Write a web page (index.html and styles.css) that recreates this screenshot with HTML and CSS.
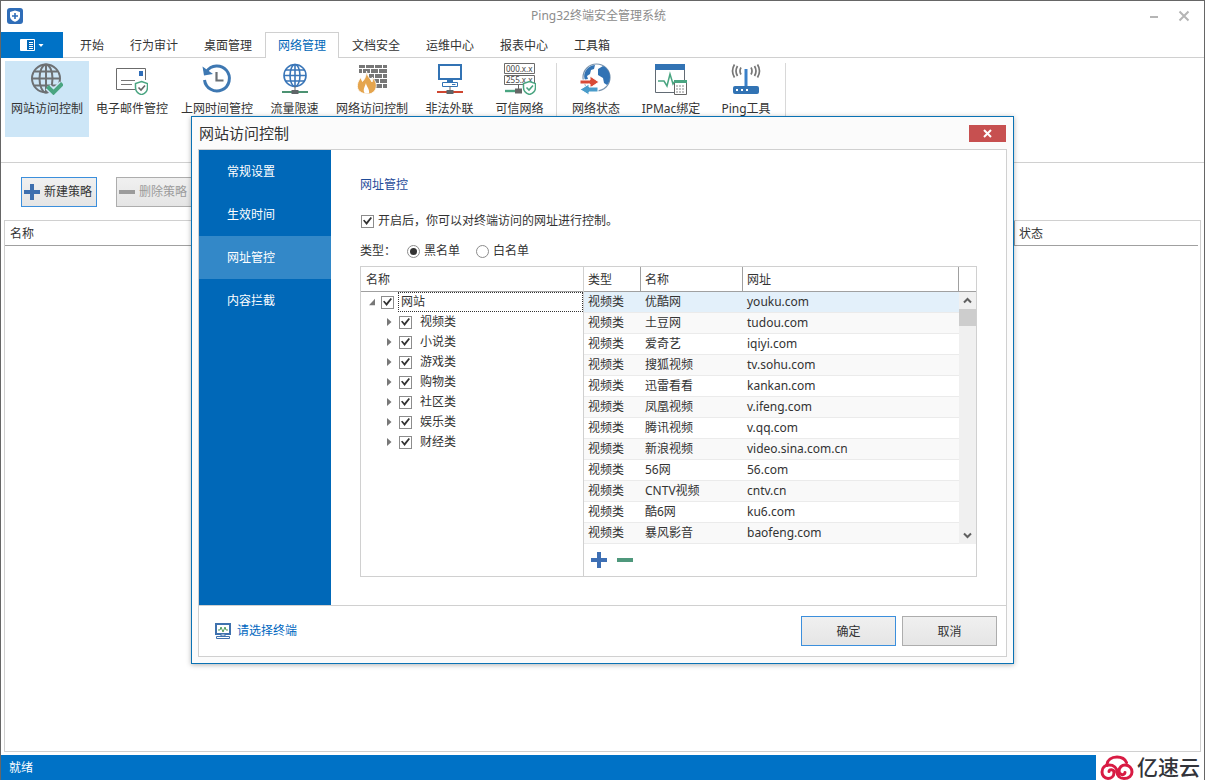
FILE: index.html
```html
<!DOCTYPE html>
<html lang="zh-CN">
<head>
<meta charset="utf-8">
<title>Ping32终端安全管理系统</title>
<link rel="stylesheet" href="styles.css">
</head>
<body>
<div class="app">
  <header class="titlebar">
    <svg class="app-logo" viewBox="0 0 16 16"><rect width="16" height="16" rx="3" fill="#2f6db8"/><path d="M8 2.500l5 1.400v4.300c0 3-2.500 4.600-5 5.600-2.500-1-5-2.600-5-5.600V3.900z" fill="#fff"/><path d="M8 5v6M5 8h6" stroke="#2f6db8" stroke-width="1.600"/></svg>
    <h1 class="app-title">Ping32终端安全管理系统</h1>
    <div class="window-buttons">
      <button class="window-button" aria-label="最小化"><svg viewBox="0 0 12 12"><path d="M2 7h8" stroke="#b5b5b5" stroke-width="2"/></svg></button>
      <button class="window-button" aria-label="关闭"><svg viewBox="0 0 12 12"><path d="M1.500 1.500l9 9M10.500 1.500l-9 9" stroke="#b5b5b5" stroke-width="2"/></svg></button>
    </div>
  </header>

  <nav class="tabs">
    <button class="file-menu" aria-label="菜单">
      <svg class="file-icon" viewBox="0 0 24 12"><path d="M.5.5h14v11H.5z" fill="#0068b8" stroke="#fff"/><path d="M1 1h6v10H1z" fill="#fff"/><path d="M9 3.500h4M9 5.500h4M9 7.500h4M9 9.500h4" stroke="#fff"/><path d="M18.500 5h5L21 8z" fill="#fff"/></svg>
    </button>
    <button class="tab">开始</button>
    <button class="tab">行为审计</button>
    <button class="tab">桌面管理</button>
    <button class="tab tab-active">网络管理</button>
    <button class="tab">文档安全</button>
    <button class="tab">运维中心</button>
    <button class="tab">报表中心</button>
    <button class="tab">工具箱</button>
  </nav>

  <section class="ribbon">
    <button class="tool tool-wide tool-active">
      <svg viewBox="0 0 32 32"><g fill="none" stroke="#6d7073" stroke-width="2"><circle cx="15" cy="15.500" r="14"/><ellipse cx="15" cy="15.500" rx="6.500" ry="14"/><path d="M15 1v29M1 15.500h28M3.500 8.500h23M3.500 22.500h23"/></g><path d="M17 24l5.500 5.500L31 21" fill="none" stroke="#cde6f7" stroke-width="7"/><path d="M16.500 23.500l6 6L31.500 20.500" fill="none" stroke="#4aa581" stroke-width="4"/></svg>
      网站访问控制</button>
    <button class="tool tool-wide">
      <svg viewBox="0 0 32 32"><path d="M19 26.500H.5v-21h29V17" fill="none" stroke="#6b6b6b"/><path d="M23 8h4v5h-4z" fill="#2f6db8"/><path d="M5 17.500h14M5 21.500h11" stroke="#777"/><path d="M25.500 18.500l6 2v4c0 4-3 6.200-6 7.200-3-1-6-3.200-6-7.200v-4z" fill="#fff" stroke="#4aa581" stroke-width="1.500"/><path d="M22.500 24.500l2.500 2.500 4-4.500" fill="none" stroke="#666" stroke-width="1.600"/></svg>
      电子邮件管控</button>
    <button class="tool tool-wide">
      <svg viewBox="0 0 32 32"><path d="M5.500 8.500A12.500 12.500 0 1 1 3.500 17" fill="none" stroke="#3e78b2" stroke-width="3"/><path d="M1.500 3.500l1.500 9 9-1.500z" fill="#3e78b2"/><path d="M15.500 9v8.500h7" fill="none" stroke="#6b7075" stroke-width="2.200"/></svg>
      上网时间管控</button>
    <button class="tool tool-narrow">
      <svg viewBox="0 0 32 32"><g fill="none" stroke="#3a76b8" stroke-width="1.600"><circle cx="16" cy="12.500" r="11"/><ellipse cx="16" cy="12.500" rx="5" ry="11"/><path d="M16 1.500v22M5 12.500h22M7 7h18M7 18h18"/></g><path d="M3 29h26" stroke="#4c9272" stroke-width="2"/><path d="M16 23v5" stroke="#666"/><path d="M12.500 27h7v4h-7z" fill="#5f6568"/></svg>
      流量限速</button>
    <button class="tool tool-wide">
      <svg viewBox="0 0 32 32"><g fill="#777"><path d="M3 2h6v3H3zM10 2h8v3h-8zM19 2h7v3h-7zM27 2h4v3h-4zM3 6h3v4H3zM7 6h7v4H7zM15 6h7v4h-7zM23 6h8v4h-8zM13 11h5v4h-5zM19 11h7v4h-7zM27 11h4v4h-4zM17 16h6v4h-6zM24 16h7v4h-7zM20 21h6v4h-6zM27 21h4v4h-4z"/></g><path d="M10.500 8c1 6 3.500 7 5.500 11 1-2 1-3 0-5 4 4 6 9 2.500 14-2 2-4 3-6 3-7.500 0-12-3.500-11-9.500.3-3 2-4.500 3-7 1 2 1.500 3 2 4 3-3 4-7 4-10.500z" fill="#e5a54e" stroke="#fff" stroke-width=".8"/><path d="M10 20c0 3 4 6 3 10.500H9c-3-3 0-7 1-10.500z" fill="#fff"/></svg>
      网络访问控制</button>
    <button class="tool tool-narrow">
      <svg viewBox="0 0 32 32"><path d="M5 2h22v14H5z" fill="none" stroke="#3273b4" stroke-width="2"/><path d="M13 16h6v3h-6z" fill="#3273b4"/><path d="M8.500 19.500h15v4h-15z" fill="#fff" stroke="#3273b4"/><path d="M18 21.500h3.500" stroke="#3273b4"/><path d="M16 23v5" stroke="#666"/><path d="M3 29h26" stroke="#cf4630" stroke-width="2"/><path d="M12.500 27h7v4h-7z" fill="#5f6568"/></svg>
      非法外联</button>
    <button class="tool tool-narrow">
      <svg viewBox="0 0 32 32"><path d="M.5.500h30v10H.5zM.5 12.500h30v9H.5z" fill="#fff" stroke="#6b6b6b"/><text class="ip-text" x="2" y="8.500">000.x.x</text><text class="ip-text" x="2" y="20">255.x.x</text><path d="M1 28h13" stroke="#4aa581" stroke-width="2.400"/><path d="M11 25.500h7v5h-7zM14 22h1v4h-1z" fill="#666"/><path d="M25.500 18.500l6 2v4c0 4-3 6-6 7-3-1-6-3-6-7v-4z" fill="#fff" stroke="#4aa581" stroke-width="1.500"/><path d="M22.500 24.500l2.500 2.500 4-4.500" fill="none" stroke="#4aa581" stroke-width="1.600"/></svg>
      可信网络</button>
    <div class="tool-separator"></div>
    <button class="tool tool-medium">
      <svg viewBox="0 0 32 32"><circle cx="16.500" cy="14.500" r="13.500" fill="#fff" stroke="#7792ad" stroke-width="1.200"/><path d="M8 5c2-2 5-3 7-3l-1 4-3 1-1 4-3 2 1 3-3 1C3 12 5 8 8 5zM18 6l5-3c4 2 7 6 7 11 0 3-1 6-3 8l-3-2-1-5-5-3z" fill="#3273b4"/><path d="M0 17h10v-4l9 6-9 6v-4H0z" fill="#d84b37" stroke="#fff"/><path d="M18 24H9v-3l-9 5.500L9 32v-3h9z" fill="#4a9cca" stroke="#fff"/></svg>
      网络状态</button>
    <button class="tool tool-medium">
      <svg viewBox="0 0 32 32"><path d="M.5 1.500h29v28H.5z" fill="#fff" stroke="#626b74"/><path d="M0 1h30v6H0z" fill="#3273b4"/><path d="M3 18h6l3 5 3-12 3 10 2-3" fill="none" stroke="#4aa581" stroke-width="1.500"/><path d="M19.500 17.500h12v14h-12z" fill="#fff" stroke="#666"/><path d="M19 17h13v3H19z" fill="#4aa581"/><path d="M21 23h9M21 26h9M21 29h9" stroke="#888" stroke-dasharray="2 1"/></svg>
      IPMac绑定</button>
    <button class="tool tool-medium">
      <svg viewBox="0 0 32 32"><g fill="none" stroke="#777" stroke-width="1.700"><path d="M11 4.500q-2 3.500 0 7M7.500 3q-3 5 0 10M4.500 1.500q-4 6.500 0 13M21 4.500q2 3.500 0 7M24.500 3q3 5 0 10M27.500 1.500q4 6.500 0 13"/></g><path d="M14.500 6h3v18h-3z" fill="#3a80c9"/><rect x="3" y="23" width="26" height="8" rx="2" fill="#3273b4"/><path d="M6 27h2M11 27h2M16 27h2" stroke="#fff" stroke-width="2"/></svg>
      Ping工具</button>
    <div class="tool-separator"></div>
  </section>

  <div class="toolbar">
    <button class="button button-icon button-focus"><svg viewBox="0 0 16 16"><path d="M8 0v16M0 8h16" stroke="#3e6fae" stroke-width="4"/></svg>新建策略</button>
    <button class="button button-icon" disabled><svg viewBox="0 0 16 16"><path d="M0 8h16" stroke="#9b9b9b" stroke-width="4"/></svg>删除策略</button>
  </div>

  <main class="policy-list">
    <table class="policy-table">
      <thead><tr><th>名称</th><th class="status-column">状态</th></tr></thead>
    </table>
  </main>

  <footer class="statusbar">
    <span class="status-text">就绪</span>
    <div class="brand">
      <svg class="brand-icon" viewBox="0 0 34 25"><g fill="none" stroke="#d81b43" stroke-width="3" stroke-linecap="round"><path d="M7 10.500C7 5 11.500 2 17 2c4.500 0 8 2 9.500 5.500"/><path d="M9 16.500c0-2.500 5-2.500 5 1 0 4-3 6-6 6-3.500 0-6-3-6-6.500C2 12.500 5 10 9 10c5 0 8 3 8 7s3 6.500 7 6.500c5 0 8-3 8-6.500 0-4-3-7-7-7-3 0-6 2.500-6 6 0 4 5.500 5 6 1.500"/></g></svg>
      <span class="brand-name">亿速云</span>
    </div>
  </footer>
</div>

<div class="overlay">
  <div class="dialog" role="dialog" aria-labelledby="dialog-title">
    <div class="dialog-head">
      <h2 class="dialog-title" id="dialog-title">网站访问控制</h2>
      <button class="dialog-close" aria-label="关闭"><svg viewBox="0 0 9 9"><path d="M1 1l7 7M8 1L1 8" stroke="#fff" stroke-width="2"/></svg></button>
    </div>
    <div class="dialog-frame">
      <div class="dialog-body">
        <nav class="side">
          <button class="side-item">常规设置</button>
          <button class="side-item">生效时间</button>
          <button class="side-item side-active">网址管控</button>
          <button class="side-item">内容拦截</button>
        </nav>
        <div class="content">
          <h3 class="section-title">网址管控</h3>
          <label class="enable-row"><input class="check" type="checkbox" checked>开启后，你可以对终端访问的网址进行控制。</label>
          <div class="type-row">
            <span class="type-label">类型：</span>
            <label class="option"><input class="radio" type="radio" name="type" checked>黑名单</label>
            <label class="option"><input class="radio" type="radio" name="type">白名单</label>
          </div>
          <div class="panes">
            <div class="tree-pane">
              <div class="tree-head">名称</div>
              <ul class="tree">
                <li class="node"><button class="expander expander-open" aria-label="折叠"></button><input class="check" type="checkbox" id="n0" checked><label class="node-label node-focus" for="n0">网站</label></li>
                <li class="node node-child"><button class="expander" aria-label="展开"></button><input class="check" type="checkbox" id="n1" checked><label class="node-label" for="n1">视频类</label></li>
                <li class="node node-child"><button class="expander" aria-label="展开"></button><input class="check" type="checkbox" id="n2" checked><label class="node-label" for="n2">小说类</label></li>
                <li class="node node-child"><button class="expander" aria-label="展开"></button><input class="check" type="checkbox" id="n3" checked><label class="node-label" for="n3">游戏类</label></li>
                <li class="node node-child"><button class="expander" aria-label="展开"></button><input class="check" type="checkbox" id="n4" checked><label class="node-label" for="n4">购物类</label></li>
                <li class="node node-child"><button class="expander" aria-label="展开"></button><input class="check" type="checkbox" id="n5" checked><label class="node-label" for="n5">社区类</label></li>
                <li class="node node-child"><button class="expander" aria-label="展开"></button><input class="check" type="checkbox" id="n6" checked><label class="node-label" for="n6">娱乐类</label></li>
                <li class="node node-child"><button class="expander" aria-label="展开"></button><input class="check" type="checkbox" id="n7" checked><label class="node-label" for="n7">财经类</label></li>
              </ul>
            </div>
            <div class="site-pane">
              <div class="site-grid">
                <table class="sites">
                  <thead><tr><th class="col-type">类型</th><th class="col-name">名称</th><th>网址</th></tr></thead>
                  <tbody>
                    <tr class="selected"><td>视频类</td><td>优酷网</td><td>youku.com</td></tr>
                    <tr><td>视频类</td><td>土豆网</td><td>tudou.com</td></tr>
                    <tr><td>视频类</td><td>爱奇艺</td><td>iqiyi.com</td></tr>
                    <tr><td>视频类</td><td>搜狐视频</td><td>tv.sohu.com</td></tr>
                    <tr><td>视频类</td><td>迅雷看看</td><td>kankan.com</td></tr>
                    <tr><td>视频类</td><td>凤凰视频</td><td>v.ifeng.com</td></tr>
                    <tr><td>视频类</td><td>腾讯视频</td><td>v.qq.com</td></tr>
                    <tr><td>视频类</td><td>新浪视频</td><td>video.sina.com.cn</td></tr>
                    <tr><td>视频类</td><td>56网</td><td>56.com</td></tr>
                    <tr><td>视频类</td><td>CNTV视频</td><td>cntv.cn</td></tr>
                    <tr><td>视频类</td><td>酷6网</td><td>ku6.com</td></tr>
                    <tr><td>视频类</td><td>暴风影音</td><td>baofeng.com</td></tr>
                  </tbody>
                </table>
                <div class="scroll-column">
                  <div class="scroll-head"></div>
                  <div class="scrollbar">
                    <button class="scroll-arrow" aria-label="向上"><svg viewBox="0 0 9 9"><path d="M1 6.500L4.500 3 8 6.500" fill="none" stroke="#606060" stroke-width="2"/></svg></button>
                    <div class="scroll-track"><div class="scroll-thumb"></div></div>
                    <button class="scroll-arrow" aria-label="向下"><svg viewBox="0 0 9 9"><path d="M1 2.500L4.500 6 8 2.500" fill="none" stroke="#606060" stroke-width="2"/></svg></button>
                  </div>
                </div>
              </div>
              <div class="site-actions">
                <button class="mini" aria-label="添加"><svg viewBox="0 0 16 16"><path d="M8 0v16M0 8h16" stroke="#3e6fb4" stroke-width="4"/></svg></button>
                <button class="mini" aria-label="删除"><svg viewBox="0 0 16 16"><path d="M0 8h16" stroke="#4f987c" stroke-width="4"/></svg></button>
              </div>
            </div>
          </div>
        </div>
      </div>
      <div class="dialog-foot">
        <a class="pick" href="#"><svg viewBox="0 0 16 16"><path d="M1 1h14v10H1z" fill="#fff" stroke="#3f72ae" stroke-width="2"/><path d="M3 7h2l1-3 2 5 2-5 1 3h2" fill="none" stroke="#4f9c5c"/><path d="M1.500 13.500h13v2h-13zM6 11h4v2H6z" fill="#fff" stroke="#3f72ae"/></svg>请选择终端</a>
        <div class="foot-buttons">
          <button class="button button-wide button-focus">确定</button>
          <button class="button button-wide">取消</button>
        </div>
      </div>
    </div>
  </div>
</div>
</body>
</html>
```
FILE: styles.css
```css
* { box-sizing: border-box; }
body {
  margin: 0;
  color: #333;
  background: #fff;
  font: 12px/16px "Noto Sans", "Noto Sans CJK SC", sans-serif;
}
button {
  margin: 0;
  padding: 0;
  border: 0;
  background: none;
  color: inherit;
  font: inherit;
}
h1, h2, h3, ul { margin: 0; padding: 0; font-weight: normal; list-style: none; }
svg { display: block; flex: none; }

.app {
  display: flex;
  flex-direction: column;
  min-height: 100vh;
  border: 1px solid #666;
  border-bottom: 0;
}
.titlebar {
  display: grid;
  grid-template-columns: 1fr auto 1fr;
  align-items: center;
  height: 31px;
  padding: 0 14px 2px 6px;
}
.app-logo { width: 16px; height: 16px; }
.app-title { color: #8c8c8c; font-size: 12px; }
.window-buttons { display: flex; justify-content: flex-end; gap: 18px; }
.window-button svg { width: 12px; height: 12px; }

.tabs { display: flex; height: 26px; border-bottom: 1px solid #d0d0d0; }
.file-menu {
  display: flex;
  align-items: center;
  justify-content: center;
  width: 62px;
  height: 26px;
  margin-right: 4px;
  background: #0072c6;
}
.file-icon { width: 24px; height: 12px; }
.tab { height: 26px; padding: 2px 13px 0; }
.tab-active {
  padding: 1px 12px 0;
  border: 1px solid #d0d0d0;
  border-bottom: 0;
  background: #fff;
  color: #0067b8;
}

.ribbon {
  display: flex;
  gap: 1px;
  height: 105px;
  padding: 3px 4px 25px;
  border-bottom: 1px solid #d0d0d0;
}
.tool {
  display: flex;
  flex-direction: column;
  align-items: center;
  gap: 6px;
  padding-top: 2px;
  white-space: nowrap;
}
.tool svg { width: 32px; height: 32px; }
.tool-wide { width: 84px; }
.tool-narrow { width: 69px; }
.tool-medium { width: 74px; }
.tool-active { background: #cde6f7; }
.tool-separator { width: 1px; margin: 2px 1px 0; background: #d8d8d8; }
.ip-text { font-size: 8px; fill: #444; }

.toolbar { display: flex; gap: 19px; padding: 14px 20px 13px; }
.button {
  height: 30px;
  padding: 2px 2px 0;
  border: 1px solid #adadad;
  background: linear-gradient(#f0f0f0, #e5e5e5);
}
.button-icon { display: flex; align-items: center; gap: 4px; width: 76px; padding: 0 2px; white-space: nowrap; }
.button-icon svg { width: 16px; height: 16px; }
.button-focus { border-color: #3c8fdc; }
.button:disabled { color: #9b9b9b; }
.button-wide { width: 95px; }

.policy-list {
  flex: 1;
  margin: 0 3px 3px;
  padding-right: 2px;
  border: 1px solid #d0d0d0;
}
.policy-table { width: 100%; border-collapse: separate; border-spacing: 0; }
.policy-table th {
  height: 25px;
  padding: 1px 5px 0;
  border-bottom: 1px solid #a0a0a0;
  font-weight: normal;
  text-align: left;
}
.policy-table .status-column { width: 184px; padding-left: 4px; border-left: 1px solid #a0a0a0; }

.statusbar {
  display: flex;
  align-items: center;
  justify-content: space-between;
  height: 25px;
  padding-left: 8px;
  background: #0072c6;
  color: #fff;
}
.status-text { padding-top: 1px; }
.brand {
  display: flex;
  align-items: center;
  gap: 3px;
  height: 25px;
  padding: 0 4px;
  background: #fff;
  color: #33343a;
}
.brand-icon { width: 34px; height: 25px; }
.brand-name { font-size: 21px; font-weight: 500; line-height: 25px; }

.overlay {
  position: absolute;
  inset: 0;
  display: grid;
  align-items: center;
  padding: 0 191px;
}
.dialog {
  padding: 0 6px 6px;
  border: 1px solid #0a72b4;
  background: #fbfbfb;
  box-shadow: 0 1px 5px rgba(0, 0, 0, 0.3);
}
.dialog-head {
  display: flex;
  align-items: center;
  justify-content: space-between;
  height: 32px;
  padding: 0 1px;
}
.dialog-title { font-size: 15px; line-height: 20px; }
.dialog-close {
  display: grid;
  place-items: center;
  width: 37px;
  height: 17px;
  background: #c75050;
}
.dialog-close svg { width: 9px; height: 9px; }
.dialog-frame { border: 1px solid #d0d0d0; background: #fff; }
.dialog-body { display: flex; border-bottom: 1px solid #d0d0d0; }
.side { flex: none; width: 132px; background: #0068b8; color: #fff; }
.side-item { display: block; width: 100%; height: 43px; padding-left: 28px; text-align: left; }
.side-active { background: #3388c8; }
.content { flex: 1; min-width: 0; padding: 27px 29px 28px; }
.section-title { color: #1f4b99; font-size: 12px; }
.enable-row { display: flex; align-items: center; gap: 4px; margin-top: 20px; padding-left: 1px; }
.type-row { display: flex; align-items: center; gap: 16px; margin: 14px 0 7px; }
.type-label { width: 31px; white-space: nowrap; }
.option { display: flex; align-items: center; gap: 4px; }

.check, .radio {
  display: grid;
  place-items: center;
  flex: none;
  appearance: none;
  width: 13px;
  height: 13px;
  margin: 0;
  border: 1px solid #8c8c8c;
  background: #fff;
}
.check:checked::before {
  content: "";
  width: 9px;
  height: 9px;
  background: #333;
  clip-path: polygon(0 45%, 15% 35%, 38% 62%, 85% 5%, 100% 18%, 40% 95%);
}
.radio { border-radius: 50%; }
.radio:checked::before { content: ""; width: 7px; height: 7px; border-radius: 50%; background: #333; }

.panes { display: flex; border: 1px solid #d0d0d0; }
.tree-pane { flex: none; width: 223px; border-right: 1px solid #d0d0d0; }
.tree-head { height: 25px; padding-left: 5px; border-bottom: 1px solid #a0a0a0; line-height: 26px; }
.node { display: flex; align-items: center; height: 20px; padding-left: 8px; }
.node-child { padding-left: 26px; }
.expander { width: 6px; height: 8px; margin-right: 6px; background: #777; clip-path: polygon(0 0, 75% 50%, 0 100%); }
.expander-open { clip-path: polygon(100% 10%, 100% 90%, 0 90%); }
.node-label { flex: 1; margin-left: 4px; padding: 1px 4px; line-height: 16px; }
.node-focus { padding: 1px 2px; border: 1px dotted #333; }
.site-pane { flex: 1; min-width: 0; }
.site-grid { display: flex; }
.sites { flex: 1; border-collapse: separate; border-spacing: 0; table-layout: fixed; }
.sites th {
  height: 25px;
  padding: 2px 4px 0;
  border-right: 1px solid #a0a0a0;
  border-bottom: 1px solid #a0a0a0;
  font-weight: normal;
  text-align: left;
}
.sites td { height: 21px; padding: 0 4px; border-bottom: 1px solid #ebebeb; white-space: nowrap; }
.sites tr:nth-child(even) td { background: #f9f9f9; }
.sites .selected td { background: #e3f0fa; }
.col-type { width: 57px; }
.col-name { width: 102px; }
.scroll-column { display: flex; flex-direction: column; width: 17px; }
.scroll-head { height: 25px; border-bottom: 1px solid #a0a0a0; }
.scrollbar { display: flex; flex: 1; flex-direction: column; background: #f0f0f0; }
.scroll-arrow { display: grid; place-items: center; height: 17px; }
.scroll-arrow svg { width: 9px; height: 9px; }
.scroll-track { flex: 1; }
.scroll-thumb { height: 17px; background: #cdcdcd; }
.site-actions { display: flex; gap: 10px; padding: 8px 7px; }
.mini svg { width: 16px; height: 16px; }

.dialog-foot {
  display: flex;
  align-items: center;
  justify-content: space-between;
  height: 50px;
  padding: 0 9px 0 16px;
}
.pick { display: flex; align-items: center; gap: 6px; color: #0067c0; text-decoration: none; }
.pick svg { width: 16px; height: 16px; }
.foot-buttons { display: flex; gap: 6px; }
```
